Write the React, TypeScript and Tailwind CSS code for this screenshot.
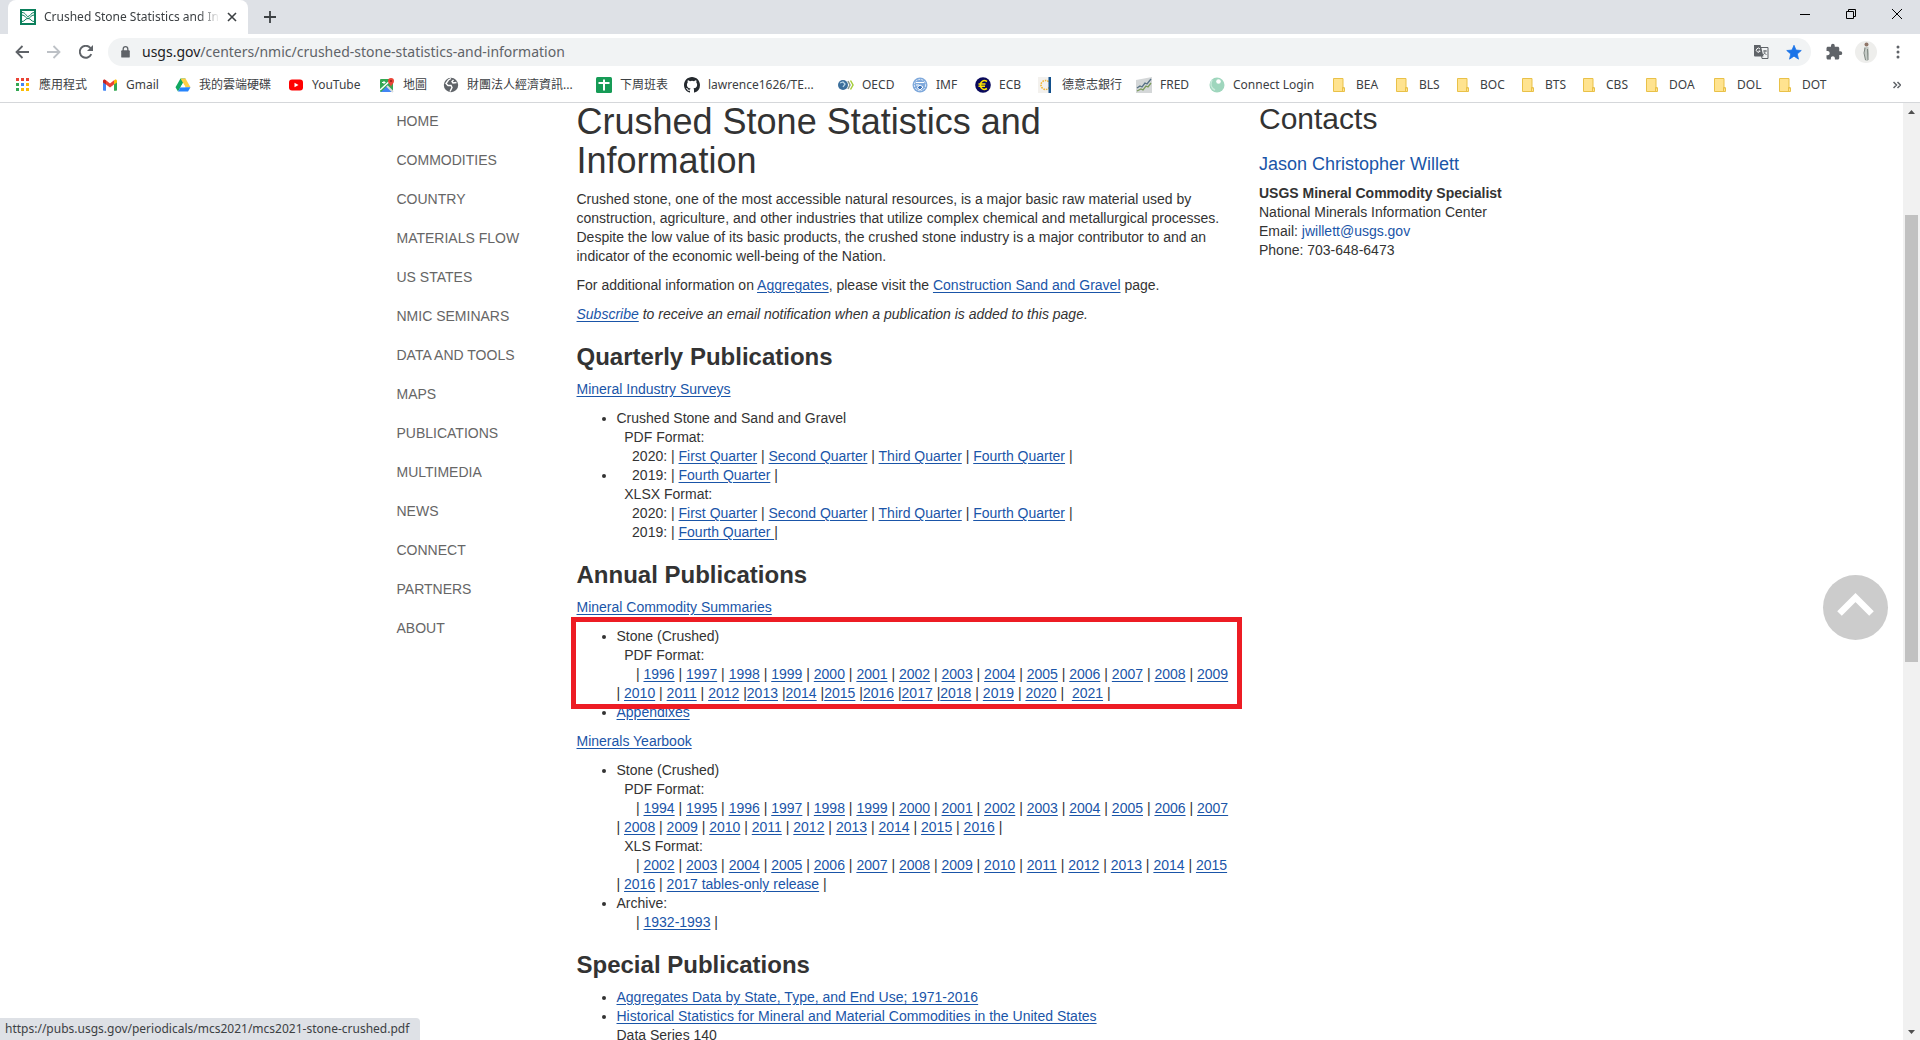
import React from 'react';

const NAV = ['HOME', 'COMMODITIES', 'COUNTRY', 'MATERIALS FLOW', 'US STATES', 'NMIC SEMINARS', 'DATA AND TOOLS', 'MAPS', 'PUBLICATIONS', 'MULTIMEDIA', 'NEWS', 'CONNECT', 'PARTNERS', 'ABOUT'];

const Icon = ({ children, box = '0 0 16 16' }: { children: React.ReactNode; box?: string }) => (
  <svg viewBox={box} className="size-4 shrink-0" aria-hidden="true">{children}</svg>
);

const icons: Record<string, React.ReactNode> = {
  apps: (
    <Icon>
      {['#ea4335', '#ea4335', '#ea4335', '#34a853', '#4285f4', '#fbbc05', '#34a853', '#fbbc05', '#fbbc05'].map((c, i) => (
        <rect key={i} x={(i % 3) * 5 + 1} y={Math.floor(i / 3) * 5 + 1} width="3" height="3" fill={c} />
      ))}
    </Icon>
  ),
  gmail: (
    <Icon>
      <path d="M1 3.8V13a.8.8 0 0 0 .8.8H4V7z" fill="#4285f4" />
      <path d="M15 3.8V13a.8.8 0 0 1-.8.8H12V7z" fill="#34a853" />
      <path d="M4 3.2v4.2L8 10.6l4-3.2V3.2L8 6.4z" fill="#ea4335" />
      <path d="M1 4v1.4l3 2.2V3.3l-.6-.4C2.400 2.100 1 2.800 1 4z" fill="#c5221f" />
      <path d="M15 4v1.400l-3 2.200V3.300l.6-.4C13.600 2.100 15 2.800 15 4z" fill="#fbbc04" />
    </Icon>
  ),
  drive: (
    <Icon>
      <path d="M5.500 1.500h5L8 6 3 14.500.5 10.200z" fill="#11a861" />
      <path d="M5.500 1.500h5l5 8.700h-5z" fill="#ffcf48" />
      <path d="M5.500 10.200h10L13 14.500H3z" fill="#2684fc" />
      <path d="M8 6l2.400 4.200H5.500z" fill="#fff" />
    </Icon>
  ),
  youtube: (
    <Icon><rect x="1" y="2.500" width="14" height="11" rx="3" fill="#f00" /><path d="M6.500 5.700v4.600l4-2.300z" fill="#fff" /></Icon>
  ),
  maps: (
    <Icon>
      <rect x="1" y="2" width="13" height="13" rx="1" fill="#34a853" />
      <path d="M2 15l6-6 6 6z" fill="#4285f4" />
      <path d="M1 13L13 2" stroke="#fff" strokeWidth="1.500" />
      <path d="M8 9l6 6" stroke="#dadce0" strokeWidth="2" />
      <path d="M3 5.500h3.500M5 4v3" stroke="#fff" />
      <path d="M12 10C11.500 7.500 9 6.500 9 4a3 3 0 0 1 6 0c0 2.500-2.500 3.500-3 6z" fill="#ea4335" />
      <circle cx="12" cy="4" r="1" fill="#8c1d18" />
    </Icon>
  ),
  globe: (
    <Icon>
      <circle cx="8" cy="8" r="7.200" fill="#5f6368" />
      <path d="M8 1.500L5.500 3 3 6.500l2 2h3l1 2-2 4" fill="none" stroke="#fff" strokeWidth="1.400" />
      <path d="M13.500 5.500L10 6 9 4.500l1.500-1.500" fill="none" stroke="#fff" strokeWidth="1.400" />
    </Icon>
  ),
  sheets: (
    <Icon><rect width="16" height="16" rx="1.500" fill="#169b56" /><path d="M8 2.500v11M2.500 6h11" stroke="#fff" strokeWidth="2" /></Icon>
  ),
  github: (
    <Icon>
      <path fill="#24292e" fillRule="evenodd" d="M8 0C3.580 0 0 3.580 0 8c0 3.540 2.290 6.530 5.470 7.590.4.070.55-.17.55-.38 0-.19-.01-.82-.01-1.490-2.010.37-2.530-.49-2.690-.94-.09-.23-.48-.94-.82-1.130-.28-.15-.68-.52-.01-.53.63-.01 1.080.58 1.230.82.72 1.210 1.870.87 2.330.66.07-.52.28-.87.51-1.070-1.780-.2-3.640-.89-3.640-3.950 0-.87.31-1.590.82-2.150-.08-.2-.36-1.020.08-2.120 0 0 .67-.21 2.200.82a7.600 7.600 0 0 1 4 0c1.530-1.040 2.200-.82 2.200-.82.44 1.100.16 1.920.08 2.120.51.56.82 1.270.82 2.150 0 3.070-1.870 3.750-3.650 3.950.29.25.54.73.54 1.480 0 1.070-.01 1.930-.01 2.200 0 .21.15.46.55.38A8 8 0 0 0 16 8c0-4.420-3.580-8-8-8z" />
    </Icon>
  ),
  oecd: (
    <Icon>
      <circle cx="5" cy="8" r="5" fill="#3b6f9c" /><path d="M2 6l3-1 2 2-2 3" stroke="#b9d7e8" fill="none" strokeWidth="1.300" />
      <path d="M10 4l2 4-2 4" stroke="#8a9a8c" fill="none" strokeWidth="1.500" /><path d="M12.500 3.500l2.500 4.500-2.500 4.500" stroke="#a6ce39" fill="none" strokeWidth="1.500" />
    </Icon>
  ),
  imf: (
    <Icon>
      <circle cx="8" cy="8" r="7.500" fill="#7fa9dc" /><circle cx="8" cy="8" r="5.600" fill="none" stroke="#fff" strokeWidth=".8" strokeDasharray="2 1" />
      <path d="M4 5.500h8M8 8l3 2-3 3-3-2.500zM4 8h3" stroke="#fff" fill="#3d73b9" />
    </Icon>
  ),
  ecb: (
    <Icon>
      <circle cx="8" cy="8" r="7.800" fill="#0a0a5c" />
      <path d="M12 4.500C8.500 2.200 5.500 4.500 5.500 8s3 5.800 6.500 3.500M3.500 7h7M3.500 9.200h6.500" fill="none" stroke="#ffe600" strokeWidth="1.600" />
    </Icon>
  ),
  bank: (
    <Icon>
      <rect width="11" height="16" fill="#f3f1ee" /><circle cx="7.500" cy="8" r="4.500" fill="none" stroke="#f2b632" strokeWidth="1.600" strokeDasharray="1.500 1" />
      <rect x="10.500" width="2.500" height="16" fill="#12508c" />
    </Icon>
  ),
  fred: (
    <Icon>
      <path d="M0 3L16 0v16H0z" fill="#d4d7d8" /><path d="M1 11l3-2 2 1 3-4 2 1 4-5" fill="none" stroke="#557084" strokeWidth="1.300" />
      <path d="M1 14l4-2 2 1 3-4 2 1 3-4" fill="none" stroke="#7b9a5b" strokeWidth="1.300" />
    </Icon>
  ),
  connect: (
    <Icon><circle cx="8" cy="8" r="7.500" fill="#9fd6bd" /><path d="M3 3c-2 4-1 8 3 10" stroke="#c9eadb" strokeWidth="1.500" fill="none" /><circle cx="9.500" cy="4.500" r="2.300" fill="#fff" /></Icon>
  ),
  folder: (
    <Icon><path d="M1.500 1.500h9.500v9.500h1.500v3.500H1.500z" fill="#ffe38f" stroke="#e9c148" /><path d="M10.500 14v-3.500h2" fill="none" stroke="#e9c148" /></Icon>
  ),
};

const BOOKMARKS: [string, string, string][] = [
  ['apps', '應用程式', 'w-[87px]'],
  ['gmail', 'Gmail', 'w-[73px]'],
  ['drive', '我的雲端硬碟', 'w-[113px]'],
  ['youtube', 'YouTube', 'w-[91px]'],
  ['maps', '地圖', 'w-[64px]'],
  ['globe', '財團法人經濟資訊...', 'w-[153px]'],
  ['sheets', '下周班表', 'w-[88px]'],
  ['github', 'lawrence1626/TE...', 'w-[154px]'],
  ['oecd', 'OECD', 'w-[74px]'],
  ['imf', 'IMF', 'w-[63px]'],
  ['ecb', 'ECB', 'w-[63px]'],
  ['bank', '德意志銀行', 'w-[98px]'],
  ['fred', 'FRED', 'w-[73px]'],
  ['connect', 'Connect Login', 'w-[123px]'],
  ['folder', 'BEA', 'w-[63px]'],
  ['folder', 'BLS', 'w-[61px]'],
  ['folder', 'BOC', 'w-[65px]'],
  ['folder', 'BTS', 'w-[61px]'],
  ['folder', 'CBS', 'w-[63px]'],
  ['folder', 'DOA', 'w-[68px]'],
  ['folder', 'DOL', 'w-[65px]'],
  ['folder', 'DOT', 'w-[65px]'],
];

const A = ({ children }: { children: React.ReactNode }) => (
  <a href="#" className="text-[#1a55a8] underline underline-offset-2">{children}</a>
);

const Run = ({ items }: { items: string[] }) => (
  <>
    {items.map((t) => (
      <React.Fragment key={t}>| <A>{t}</A> </React.Fragment>
    ))}
    |
  </>
);

const years = (from: number, to: number) => Array.from({ length: to - from + 1 }, (_, i) => String(from + i));
const QUARTERS = ['First Quarter', 'Second Quarter', 'Third Quarter', 'Fourth Quarter'];
const sp = (n: number) => '\u00a0'.repeat(n);

const H2 = ({ children }: { children: React.ReactNode }) => (
  <h2 className="mt-5 mb-2.5 text-2xl leading-[26px] font-bold">{children}</h2>
);

function TabStrip() {
  return (
    <div className="flex h-[34px] items-end bg-[#dee1e6]">
      <div className="ml-2 flex h-[34px] w-60 items-center rounded-t-lg bg-white pl-3 pr-2">
        <svg viewBox="0 0 16 16" className="size-4 shrink-0" aria-hidden="true">
          <rect x="1" y="1" width="14" height="14" fill="#fff" stroke="#0b7f5b" strokeWidth="2" />
          <path d="M2 3.500c4 0 4 4 6 4s3-4 6-4M2 6c3 0 4 3.500 6 3.500S11 6 14 6M2 12.500c3 0 3-3 6-3s3 3 6 3" fill="none" stroke="#0b7f5b" />
        </svg>
        <span className="ml-2 w-[176px] overflow-hidden text-xs whitespace-nowrap text-[#3c4043] [mask-image:linear-gradient(to_right,black_88%,transparent)]">
          Crushed Stone Statistics and Information
        </span>
        <button aria-label="Close tab" className="ml-1 grid size-4 place-items-center">
          <svg viewBox="0 0 10 10" className="size-2.5"><path d="M1 1l8 8M9 1L1 9" stroke="#3c4043" strokeWidth="1.600" /></svg>
        </button>
      </div>
      <button aria-label="New tab" className="ml-3 grid h-[34px] w-5 place-items-center">
        <svg viewBox="0 0 12 12" className="size-3"><path d="M6 0v12M0 6h12" stroke="#3c4043" strokeWidth="1.800" /></svg>
      </button>
      <div className="ml-auto flex h-7 items-center self-start">
        <button aria-label="Minimize" className="grid w-[46px] place-items-center">
          <svg viewBox="0 0 10 10" className="size-2.5"><path d="M0 5.500h10" stroke="#000" /></svg>
        </button>
        <button aria-label="Restore" className="grid w-[46px] place-items-center">
          <svg viewBox="0 0 10 10" className="size-2.5"><path d="M.5 2.500h7v7h-7zM2.500 2.500v-2h7v7h-2" fill="none" stroke="#000" /></svg>
        </button>
        <button aria-label="Close" className="grid w-[46px] place-items-center">
          <svg viewBox="0 0 10 10" className="size-2.5"><path d="M0 0l10 10M10 0L0 10" stroke="#000" /></svg>
        </button>
      </div>
    </div>
  );
}

function Toolbar() {
  return (
    <div className="flex h-9 items-center pr-3.5 pl-3">
      <button aria-label="Back" className="mr-3 grid size-5 place-items-center text-[#5f6368]">
        <svg viewBox="0 0 14 14" className="size-3.5"><path d="M14 7H1.500M7.500 1L1.500 7l6 6" fill="none" stroke="currentColor" strokeWidth="1.800" /></svg>
      </button>
      <button aria-label="Forward" className="mr-3 grid size-5 place-items-center text-[#bdc1c6]">
        <svg viewBox="0 0 14 14" className="size-3.5"><path d="M0 7h12.500M6.500 1l6 6-6 6" fill="none" stroke="currentColor" strokeWidth="1.800" /></svg>
      </button>
      <button aria-label="Reload" className="mr-3 grid size-5 place-items-center text-[#5f6368]">
        <svg viewBox="0 0 14 14" className="size-3.5"><path d="M12.300 9.200A6 6 0 1 1 11.300 2.800L13 4.500" fill="none" stroke="currentColor" strokeWidth="1.900" /><path d="M14 0v6H8z" fill="currentColor" /></svg>
      </button>
      <div className="flex h-7 flex-1 items-center rounded-full bg-[#f1f3f4] pr-2 pl-[13px]">
        <svg viewBox="0 0 10 14" className="h-3 w-[9px]"><rect y="5" width="10" height="8.500" rx="1" fill="#5f6368" /><path d="M2.300 6V3.500a2.700 2.700 0 0 1 5.400 0V6" fill="none" stroke="#5f6368" strokeWidth="1.500" /></svg>
        <div className="ml-3 flex-1 text-sm text-[#5f6368]"><span className="text-[#202124]">usgs.gov</span>/centers/nmic/crushed-stone-statistics-and-information</div>
        <button aria-label="Translate" className="mr-4">
          <svg viewBox="0 0 16 16" className="size-4"><path d="M7.500 3.500H15v11H9z" fill="#f1f3f4" stroke="#5f6368" /><path d="M1 1h6.500l3 11.500H2a1 1 0 0 1-1-1z" fill="#5f6368" /><path d="M7 5a2 2 0 1 0 .2 2H5.500" fill="none" stroke="#fff" /><path d="M10 7h4M12 6v1c0 2-1 3-2 4M11 8.500l2.500 2.500" fill="none" stroke="#5f6368" strokeWidth=".9" /></svg>
        </button>
        <button aria-label="Bookmark this page">
          <svg viewBox="0 0 24 24" className="size-[18px]"><path d="M12 17.500L18 21.500 16.400 14.600 21.700 10l-7-.6L12 3 9.300 9.400l-7 .6 5.300 4.600L6 21.500z" fill="#1a73e8" stroke="#1a73e8" /></svg>
        </button>
      </div>
      <button aria-label="Extensions" className="ml-3.5">
        <svg viewBox="0 0 24 24" className="size-[18px]"><path fill="#5f6368" d="M20.500 11H19V7c0-1.100-.9-2-2-2h-4V3.500a2.500 2.500 0 0 0-5 0V5H4c-1.100 0-2 .9-2 2v3.800h1.500c1.500 0 2.700 1.200 2.700 2.700S5 16.200 3.500 16.200H2V20c0 1.100.9 2 2 2h3.800v-1.500c0-1.500 1.200-2.700 2.700-2.700s2.700 1.200 2.700 2.700V22H17c1.100 0 2-.9 2-2v-4h1.500a2.500 2.500 0 0 0 0-5z" /></svg>
      </button>
      <button aria-label="Profile" className="ml-3 grid size-[22px] place-items-center rounded-full bg-[#eeeeec]">
        <svg viewBox="0 0 22 22" className="size-[22px]"><circle cx="11.500" cy="3.500" r="2" fill="#8f7668" /><path d="M9 6h4.500l.5 7-1 7h-2.500L9.500 13z" fill="#c5cbc6" /><path d="M10 7l-1 5 1.500 7M12.500 8l.5 11" stroke="#7f8782" fill="none" /></svg>
      </button>
      <button aria-label="Menu" className="ml-[13px] grid w-4 place-items-center">
        <svg viewBox="0 0 4 14" className="h-3.5 w-1"><g fill="#5f6368"><circle cx="2" cy="2" r="1.500" /><circle cx="2" cy="7" r="1.500" /><circle cx="2" cy="12" r="1.500" /></g></svg>
      </button>
    </div>
  );
}

function BookmarkBar() {
  return (
    <div className="mb-0.5 flex h-[30px] items-center pr-[19px] pl-[15px] text-xs text-[#3c4043]">
      {BOOKMARKS.map(([icon, label, width]) => (
        <a key={label} href="#" className={`flex shrink-0 items-center gap-2 whitespace-nowrap ${width}`}>
          {icons[icon]}
          {label}
        </a>
      ))}
      <button aria-label="More bookmarks" className="ml-auto">
        <svg viewBox="0 0 8 8" className="size-2"><path d="M.5 1l3 3-3 3M4.500 1l3 3-3 3" fill="none" stroke="#5f6368" strokeWidth="1.500" /></svg>
      </button>
    </div>
  );
}

function Publications() {
  return (
    <main className="col-span-7 -mt-px px-[15px]">
      <h1 className="mb-2.5 text-4xl leading-[39px]">Crushed Stone Statistics and Information</h1>
      <p className="mb-2.5">
        Crushed stone, one of the most accessible natural resources, is a major basic raw material used by construction, agriculture, and other industries that utilize complex chemical and metallurgical processes. Despite the low value of its basic products, the crushed stone industry is a major contributor to and an indicator of the economic well-being of the Nation.
      </p>
      <p className="mb-2.5">For additional information on <A>Aggregates</A>, please visit the <A>Construction Sand and Gravel</A> page.</p>
      <p className="italic"><A>Subscribe</A> to receive an email notification when a publication is added to this page.</p>

      <H2>Quarterly Publications</H2>
      <p className="mb-2.5"><A>Mineral Industry Surveys</A></p>
      <ul className="list-disc pl-10">
        <li>
          Crushed Stone and Sand and Gravel<br />
          {sp(2)}PDF Format:<br />
          {sp(4)}2020: <Run items={QUARTERS} />
        </li>
        <li>
          {sp(4)}2019: <Run items={['Fourth Quarter']} /><br />
          {sp(2)}XLSX Format:<br />
          {sp(4)}2020: <Run items={QUARTERS} /><br />
          {sp(4)}2019: | <A>Fourth Quarter </A>|
        </li>
      </ul>

      <H2>Annual Publications</H2>
      <p className="mb-2.5"><A>Mineral Commodity Summaries</A></p>
      <ul className="mb-2.5 list-disc pl-10">
        <li className="relative">
          Stone (Crushed)<br />
          {sp(2)}PDF Format:<br />
          {sp(5)}<Run items={years(1996, 2012)} />
          {years(2013, 2018).map((y, i) => (
            <React.Fragment key={y}>{i > 0 && '|'}<A>{y}</A> </React.Fragment>
          ))}
          <Run items={['2019', '2020']} />{' '}{sp(1)}<A>2021</A> |
          <span className="pointer-events-none absolute -top-2.5 -right-[13px] -bottom-1.5 -left-[46px] z-10 border-5 border-[#ed1c24]" />
        </li>
        <li><A>Appendixes</A></li>
      </ul>
      <p className="mb-2.5"><A>Minerals Yearbook</A></p>
      <ul className="list-disc pl-10">
        <li>
          Stone (Crushed)<br />
          {sp(2)}PDF Format:<br />
          {sp(5)}<Run items={years(1994, 2016)} /><br />
          {sp(2)}XLS Format:<br />
          {sp(5)}<Run items={[...years(2002, 2016), '2017 tables-only release']} />
        </li>
        <li>
          Archive:<br />
          {sp(5)}<Run items={['1932-1993']} />
        </li>
      </ul>

      <H2>Special Publications</H2>
      <ul className="list-disc pl-10">
        <li><A>Aggregates Data by State, Type, and End Use; 1971-2016</A></li>
        <li><A>Historical Statistics for Mineral and Material Commodities in the United States</A><br />Data Series 140</li>
      </ul>
    </main>
  );
}

export default function App() {
  return (
    <div className="flex h-screen flex-col overflow-hidden bg-white font-['Noto_Sans','Noto_Sans_CJK_TC',sans-serif]">
      <header className="shrink-0 border-b border-[#d5d7da]">
        <TabStrip />
        <Toolbar />
        <BookmarkBar />
      </header>
      <div className="relative flex min-h-0 flex-1">
        <div className="min-w-0 flex-1 overflow-hidden font-['Liberation_Sans',Arial,sans-serif] text-sm leading-[19px] text-[#333]">
          <div className="mx-auto grid max-w-[1170px] grid-cols-12">
            <nav className="col-span-2 pt-px pl-[30px]">
              <ul>
                {NAV.map((n) => (
                  <li key={n} className="h-[39px] pt-2"><a href="#" className="text-[#666]">{n}</a></li>
                ))}
              </ul>
            </nav>
            <Publications />
            <aside className="col-span-3 px-[15px]">
              <h2 className="mb-[19px] text-3xl leading-8">Contacts</h2>
              <h3 className="mb-2.5 text-lg leading-5"><a href="#" className="text-[#1a55a8]">Jason Christopher Willett</a></h3>
              <p>
                <strong>USGS Mineral Commodity Specialist</strong><br />
                National Minerals Information Center<br />
                Email: <a href="#" className="text-[#1a55a8]">jwillett@usgs.gov</a><br />
                Phone: 703-648-6473
              </p>
            </aside>
          </div>
        </div>
        <button aria-label="Back to top" className="absolute top-[472px] right-8 grid size-[65px] place-items-center rounded-full bg-[#ccc]">
          <svg viewBox="0 0 65 65" className="size-[65px]"><path d="M16.500 38.500L32.500 22.500l16 16" fill="none" stroke="#fff" strokeWidth="6.500" /></svg>
        </button>
        <div className="flex w-[17px] flex-col items-center bg-[#f1f1f1]">
          <svg viewBox="0 0 17 17" className="size-[17px]"><path d="M5 11l3.500-4L12 11z" fill="#505050" /></svg>
          <div className="mt-[95px] h-[447px] w-[13px] bg-[#c1c1c1]" />
          <svg viewBox="0 0 17 17" className="mt-auto size-[17px]"><path d="M5 7l3.500 4L12 7z" fill="#505050" /></svg>
        </div>
        <div className="absolute bottom-0 left-0 flex h-[22px] items-center rounded-tr bg-[#dee1e6] pr-[11px] pl-[5px] text-xs text-[#3c4043]">
          https://pubs.usgs.gov/periodicals/mcs2021/mcs2021-stone-crushed.pdf
        </div>
      </div>
    </div>
  );
}
